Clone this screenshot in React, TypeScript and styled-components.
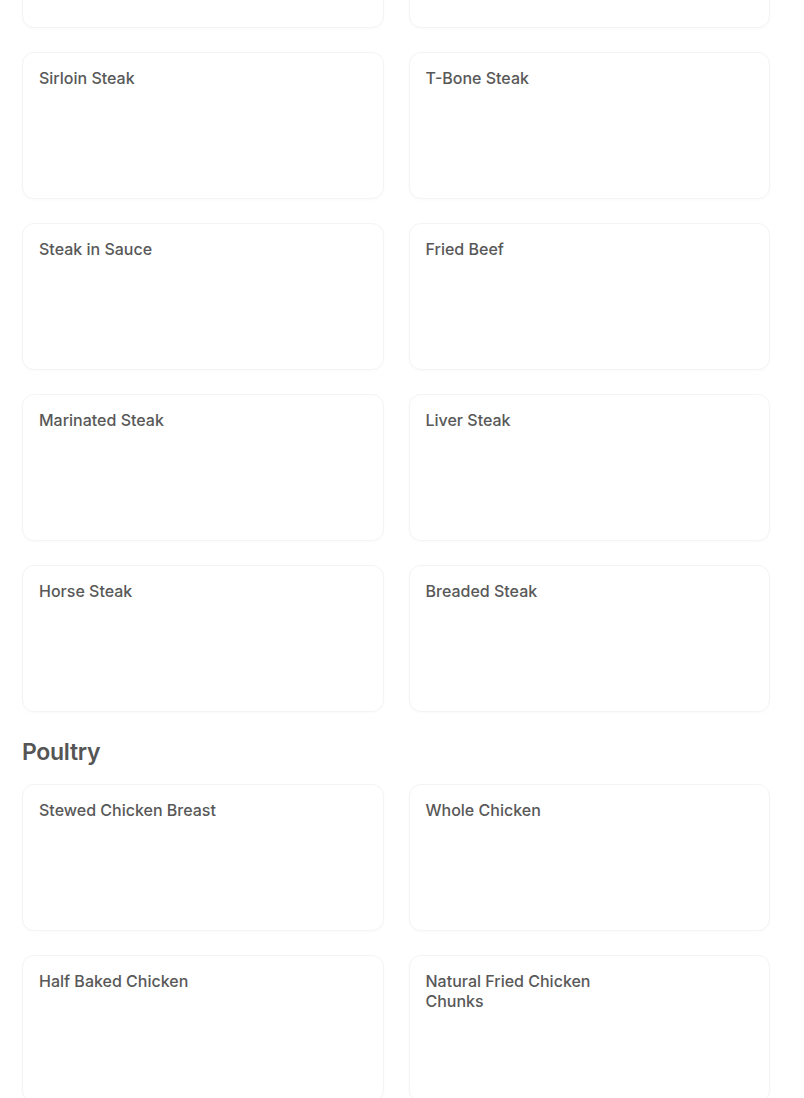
import styled, { createGlobalStyle } from 'styled-components';

const GlobalStyle = createGlobalStyle`
  html, body {
    margin: 0;
    padding: 0;
    background: #fff;
    overflow: hidden;
  }
  body {
    font-family: Inter, "Liberation Sans", sans-serif;
    color: #555;
  }
`;

const Page = styled.main`
  padding: 0 22px;
  margin-top: -119px;
  display: flex;
  flex-direction: column;
`;

const Section = styled.section`
  display: flex;
  flex-direction: column;
`;

const SectionTitle = styled.h2`
  margin: 26px 0 18px;
  font-size: 23px;
  line-height: 28px;
  font-weight: 600;
  letter-spacing: -0.3px;
  color: #555;
`;

const Grid = styled.div`
  display: grid;
  grid-template-columns: 1fr 1fr;
  column-gap: 25px;
  row-gap: 24px;
  width: 748px;
`;

const Card = styled.div`
  height: 115px;
  padding: 15px 16px;
  border: 1px solid #f4f4f4;
  border-radius: 12px;
  background: #fff;
  box-shadow: 0 1px 3px rgba(0, 0, 0, 0.025);
`;

const ItemName = styled.div`
  max-width: 60%;
  font-size: 16px;
  line-height: 20px;
  font-weight: 500;
  color: #585858;
`;

const beef = [
  '',
  '',
  'Sirloin Steak',
  'T-Bone Steak',
  'Steak in Sauce',
  'Fried Beef',
  'Marinated Steak',
  'Liver Steak',
  'Horse Steak',
  'Breaded Steak',
];

const poultry = [
  'Stewed Chicken Breast',
  'Whole Chicken',
  'Half Baked Chicken',
  'Natural Fried Chicken Chunks',
];

export default function App() {
  return (
    <>
      <GlobalStyle />
      <Page>
        <Section>
          <Grid>
            {beef.map((name, i) => (
              <Card key={i}>
                <ItemName>{name}</ItemName>
              </Card>
            ))}
          </Grid>
        </Section>
        <Section>
          <SectionTitle>Poultry</SectionTitle>
          <Grid>
            {poultry.map(name => (
              <Card key={name}>
                <ItemName>{name}</ItemName>
              </Card>
            ))}
          </Grid>
        </Section>
      </Page>
    </>
  );
}
